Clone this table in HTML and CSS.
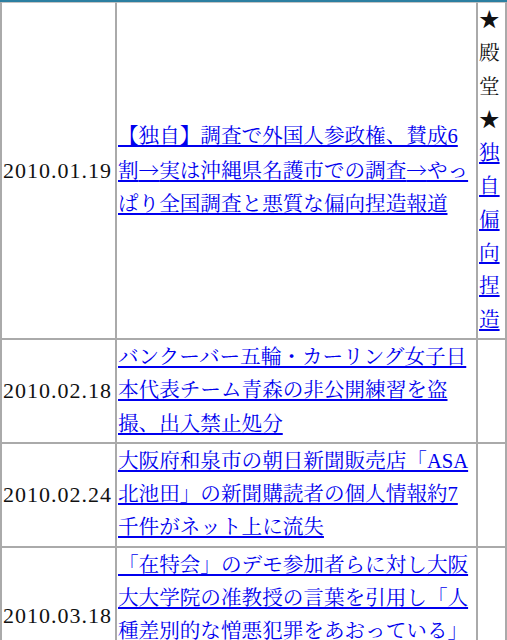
FILE: index.html
```html
<!DOCTYPE html>
<html lang="ja">
<head>
<meta charset="utf-8">
<title>偏向報道一覧</title>
<link rel="stylesheet" href="styles.css">
</head>
<body>
<div class="topbar"></div>
<table class="list">
  <tr>
    <td class="date">2010.01.19</td>
    <td class="title"><a href="#">【独自】調査で外国人参政権、賛成6割<span class="cjk">→</span>実は沖縄県名護市での調査<span class="cjk">→</span>やっぱり全国調査と悪質な偏向捏造報道</a></td>
    <td class="tag">★殿堂★<a href="#">独自偏向捏造</a></td>
  </tr>
  <tr>
    <td class="date">2010.02.18</td>
    <td class="title"><a href="#">バンクーバー五輪・カーリング女子日本代表チーム青森の非公開練習を盗撮、出入禁止処分</a></td>
    <td class="tag"></td>
  </tr>
  <tr>
    <td class="date">2010.02.24</td>
    <td class="title"><a href="#">大阪府和泉市の朝日新聞販売店「ASA北池田」の新聞購読者の個人情報約7千件がネット上に流失</a></td>
    <td class="tag"></td>
  </tr>
  <tr>
    <td class="date">2010.03.18</td>
    <td class="title"><a href="#">「在特会」のデモ参加者らに対し大阪大大学院の准教授の言葉を引用し「人種差別的な憎悪犯罪をあおっている」と報道</a></td>
    <td class="tag"></td>
  </tr>
</table>
</body>
</html>
```
FILE: styles.css
```css
html, body {
  margin: 0;
  padding: 0;
  background: #fff;
}
body {
  font-family: "Liberation Serif", "Noto Serif CJK JP", "Noto Sans CJK JP", serif;
  font-size: 20.6px;
  line-height: 33.3px;
  color: #111;
}
.topbar {
  height: 2px;
  background: #2c7fa1;
}
.list {
  width: 507px;
  table-layout: fixed;
  border-collapse: separate;
  border-spacing: 0;
  border: 1px solid #aaa;
  border-top: none;
}
.list td {
  box-sizing: border-box;
  border: 1px solid #aaa;
  padding: 1px;
  vertical-align: middle;
}
.list tr:first-child td {
  border-top: 1px solid #c4c4c4;
}
.date {
  width: 115px;
  font-size: 22px;
  letter-spacing: 1px;
  white-space: nowrap;
}
.title {
  width: 361px;
}
.tag {
  width: 29px;
  word-break: break-all;
}
.cjk {
  font-family: "Noto Serif CJK JP", "Noto Sans CJK JP", serif;
}
a {
  color: #0000ee;
  text-decoration: underline;
}
```
